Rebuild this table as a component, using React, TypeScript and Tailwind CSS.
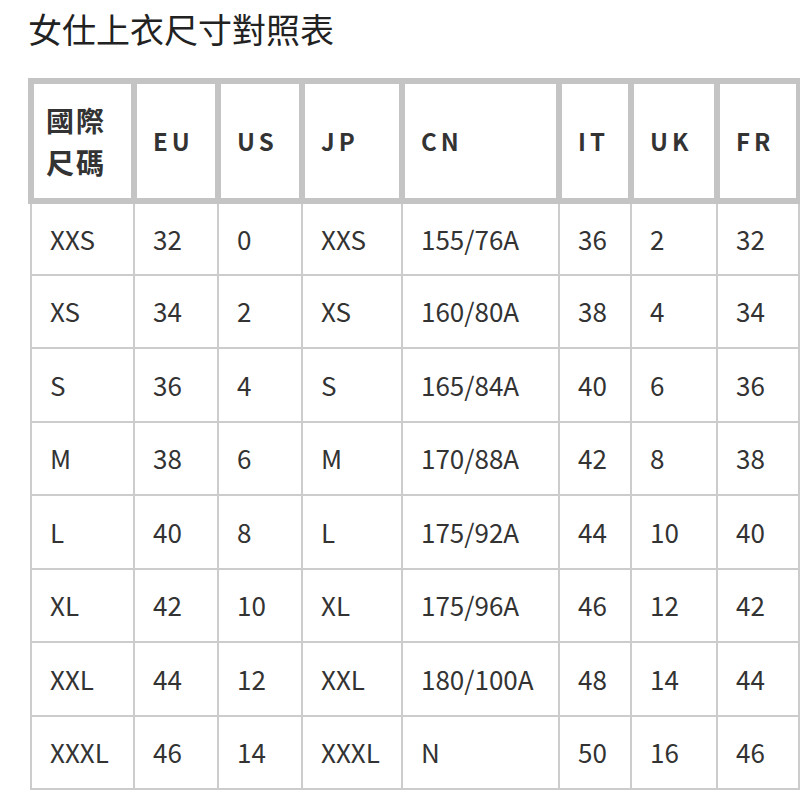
const headers = ['國際尺碼', 'EU', 'US', 'JP', 'CN', 'IT', 'UK', 'FR']

const rows: string[][] = [
  ['XXS', '32', '0', 'XXS', '155/76A', '36', '2', '32'],
  ['XS', '34', '2', 'XS', '160/80A', '38', '4', '34'],
  ['S', '36', '4', 'S', '165/84A', '40', '6', '36'],
  ['M', '38', '6', 'M', '170/88A', '42', '8', '38'],
  ['L', '40', '8', 'L', '175/92A', '44', '10', '40'],
  ['XL', '42', '10', 'XL', '175/96A', '46', '12', '42'],
  ['XXL', '44', '12', 'XXL', '180/100A', '48', '14', '44'],
  ['XXXL', '46', '14', 'XXXL', 'N', '50', '16', '46'],
]

const widths = [103, 84, 84, 100, 157, 72, 86, 82]

export default function App() {
  return (
    <div
      className="w-[800px] h-[800px] bg-white overflow-hidden text-[#333]"
      style={{ fontFamily: '"Noto Sans CJK TC", "Noto Sans", sans-serif' }}
    >
      <h1 className="pl-[28px] pt-[6px] text-[34px] leading-[46px] font-normal text-[#222]">女仕上衣尺寸對照表</h1>

      <div className="pl-[28px] pt-[26px]">
        <table className="table-fixed border-collapse w-[772px]">
          <colgroup>
            {widths.map((w, i) => (
              <col key={i} style={{ width: w }} />
            ))}
          </colgroup>
          <thead>
            <tr className="h-[120px]">
              {headers.map((h, i) => (
                <th
                  key={h}
                  className="border-[6px] border-[#c4c4c4] text-left align-middle px-[16px] text-[24px] font-bold tracking-[4px] leading-[42px] text-[#333]"
                >
                  {i === 0 ? (
                    <span className="block text-[28px] tracking-[2px] leading-[42px] -ml-[4px]">
                      國際
                      <br />
                      尺碼
                    </span>
                  ) : (
                    h
                  )}
                </th>
              ))}
            </tr>
          </thead>
          <tbody>
            {rows.map((row, r) => (
              <tr key={r} className="h-[73.5px]">
                {row.map((cell, c) => (
                  <td
                    key={c}
                    className="border-2 border-[#cccccc] px-[18px] text-[26px] leading-[32px] align-middle text-[#333]"
                  >
                    {cell}
                  </td>
                ))}
              </tr>
            ))}
          </tbody>
        </table>
      </div>
    </div>
  )
}
